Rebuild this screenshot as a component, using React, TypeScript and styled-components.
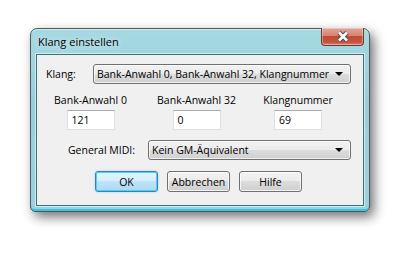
import React from "react";
import styled, { createGlobalStyle } from "styled-components";

const GlobalStyle = createGlobalStyle`
  html, body {
    margin: 0;
    padding: 0;
    background: #ffffff;
  }
  body {
    font-family: "Open Sans", "Noto Sans", "Liberation Sans", sans-serif;
    font-size: 10.5px;
    color: #000;
  }
`;

const Page = styled.div`
  width: 414px;
  height: 253px;
  box-sizing: border-box;
  padding: 28px 0 0 30px;
`;

const Window = styled.div`
  width: 340px;
  height: 184px;
  box-sizing: border-box;
  border: 1px solid #4a5a5e;
  border-radius: 7px 7px 5px 5px;
  background: linear-gradient(180deg, #a6d9e2 0%, #98d0da 40%, #9bd3dc 100%);
  box-shadow: 4px 5px 12px rgba(0, 0, 0, 0.55), inset 0 1px 0 rgba(255, 255, 255, 0.5),
    inset 0 -2px 0 #3cc2e4;
  padding: 0 5px 5px 5px;
  display: flex;
  flex-direction: column;
`;

const TitleBar = styled.div`
  height: 25px;
  display: flex;
  justify-content: space-between;
  align-items: flex-start;
`;

const Title = styled.div`
  padding: 5px 0 0 2px;
  font-size: 11px;
  text-shadow: 0 0 6px rgba(255, 255, 255, 0.9);
`;

const CloseButton = styled.div`
  width: 43px;
  height: 18px;
  margin-top: -1px;
  box-sizing: border-box;
  border: 1px solid #6a3a36;
  border-top: none;
  border-radius: 0 0 4px 4px;
  background: linear-gradient(180deg, #e4a596 0%, #d68372 45%, #c14a35 50%, #c55540 85%, #d98a72 100%);
  box-shadow: inset 0 0 0 1px rgba(255, 255, 255, 0.35);
  display: flex;
  align-items: center;
  justify-content: center;
`;

const Client = styled.div`
  flex: 1;
  border: 1px solid #3b6f79;
  box-shadow: 0 0 0 1px rgba(255, 255, 255, 0.55);
  background: #f0f0f0;
  padding: 9px 12px 0 9px;
  display: flex;
  flex-direction: column;
`;

const Row = styled.div<{ $top?: number; $justify?: string }>`
  display: flex;
  align-items: center;
  justify-content: ${(p) => p.$justify || "space-between"};
  margin-top: ${(p) => p.$top || 0}px;
  height: 20px;
`;

const Label = styled.span<{ $gap?: number }>`
  margin-right: ${(p) => p.$gap || 0}px;
  white-space: nowrap;
`;

const Select = styled.div<{ $width: number }>`
  width: ${(p) => p.$width}px;
  height: 20px;
  box-sizing: border-box;
  border: 1px solid #707070;
  border-radius: 3px;
  background: linear-gradient(180deg, #f2f2f2 0%, #ebebeb 50%, #dddddd 50%, #cfcfcf 100%);
  box-shadow: inset 0 0 0 1px rgba(255, 255, 255, 0.7);
  display: flex;
  align-items: center;
  justify-content: space-between;
  padding: 0 7px 0 3px;
  white-space: nowrap;
  overflow: hidden;
`;

const Arrow = styled.span`
  flex: none;
  width: 0;
  height: 0;
  border-left: 4px solid transparent;
  border-right: 4px solid transparent;
  border-top: 4px solid #000;
`;

const Columns = styled.div`
  display: grid;
  grid-template-columns: 89px 123px 80px;
  grid-template-rows: 14px 20px;
  row-gap: 3px;
  margin-top: 9px;
  justify-items: center;
  align-items: center;
`;

const Input = styled.div`
  width: 48px;
  height: 20px;
  box-sizing: border-box;
  background: #fff;
  border: 1px solid #dbdfe6;
  border-top-color: #abadb3;
  padding: 0 4px;
  display: flex;
  align-items: center;
`;

const Buttons = styled.div`
  display: flex;
  gap: 9px;
  margin-top: 11px;
  padding-left: 49px;
`;

const Button = styled.div<{ $default?: boolean }>`
  width: 63px;
  height: 21px;
  box-sizing: border-box;
  border-radius: 3px;
  border: 1px solid ${(p) => (p.$default ? "#3c7fb1" : "#707070")};
  background: ${(p) =>
    p.$default
      ? "linear-gradient(180deg, #e5f4fc 0%, #d4eefb 50%, #bde4f9 50%, #a9dbf6 100%)"
      : "linear-gradient(180deg, #f2f2f2 0%, #ebebeb 50%, #dddddd 50%, #cfcfcf 100%)"};
  box-shadow: ${(p) =>
    p.$default
      ? "inset 0 0 0 1px #4ed0f7, 0 0 2px rgba(60, 180, 240, 0.5)"
      : "inset 0 0 0 1px rgba(255, 255, 255, 0.75)"};
  display: flex;
  align-items: center;
  justify-content: center;
`;

const CloseIcon = () => (
  <svg width="14" height="11" viewBox="0 0 14 11">
    <path d="M3 1.5 L11 9.5 M11 1.5 L3 9.5" stroke="#4a4a4a" strokeWidth="4.6" />
    <path d="M3 1.5 L11 9.5 M11 1.5 L3 9.5" stroke="#ffffff" strokeWidth="2.6" />
  </svg>
);

export default function App() {
  return (
    <Page>
      <GlobalStyle />
      <Window>
        <TitleBar>
          <Title>Klang einstellen</Title>
          <CloseButton>
            <CloseIcon />
          </CloseButton>
        </TitleBar>
        <Client>
          <Row>
            <Label>Klang:</Label>
            <Select $width={258}>
              <span>Bank-Anwahl 0, Bank-Anwahl 32, Klangnummer</span>
              <Arrow />
            </Select>
          </Row>
          <Columns>
            <span>Bank-Anwahl 0</span>
            <span>Bank-Anwahl 32</span>
            <span>Klangnummer</span>
            <Input>121</Input>
            <Input>0</Input>
            <Input>69</Input>
          </Columns>
          <Row $top={10} $justify="flex-end">
            <Label $gap={13}>General MIDI:</Label>
            <Select $width={203}>
              <span>Kein GM-Äquivalent</span>
              <Arrow />
            </Select>
          </Row>
          <Buttons>
            <Button $default>OK</Button>
            <Button>Abbrechen</Button>
            <Button>Hilfe</Button>
          </Buttons>
        </Client>
      </Window>
    </Page>
  );
}
